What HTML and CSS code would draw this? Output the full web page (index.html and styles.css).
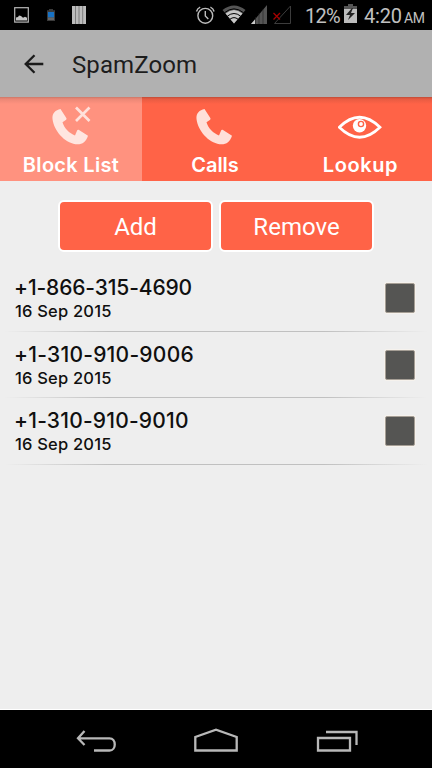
FILE: index.html
```html
<!DOCTYPE html>
<html lang="en">
<head>
<meta charset="utf-8">
<title>SpamZoom</title>
<link rel="stylesheet" href="styles.css">
</head>
<body>
<div class="screen">
  <div class="status">
    <svg class="status-icons" width="100" height="30" viewBox="0 0 100 30">
      <rect x="14.7" y="7.7" width="13.6" height="14.4" fill="none" stroke="#b8b8b8" stroke-width="1.2"/>
      <path d="M16 20.5v-3l2-.5 1-1.5 2 .5 2 1.8 2-1 2 1v2.7z" fill="#c4c4c4"/>
      <path d="M49 9h4v1.3h2V21h-8V10.300h2z" fill="#3b3b3b"/>
      <rect x="48" y="12" width="6" height="5.500" fill="#1872c4"/>
      <rect x="48" y="17.500" width="6" height="2.500" fill="#666"/>
      <path d="M72 6h14v18H72z" fill="#bcbcbc"/>
      <path d="M75.500 6v18M79 6v18M82.700 6v18" stroke="#777" stroke-width=".9"/>
    </svg>
    <svg class="signal-icons" width="100" height="30" viewBox="194 0 100 30">
      <g fill="none" stroke="#bcbcbc" stroke-width="1.400">
        <circle cx="205.300" cy="15.800" r="7.400"/>
        <path d="M205.300 11v5l3 3M196.500 11.500c.5-2 1.800-3.500 3.700-4.300M214.100 11.500c-.5-2-1.800-3.500-3.700-4.300"/>
      </g>
      <path d="M222.500 10Q234 1 245.500 10L234 23.500z" fill="#555"/>
      <path d="M225.500 13.500Q234 6.500 242.500 13.500L234 23.500z" fill="#c8c8c8"/>
      <path d="M224.500 12.700Q234 5 243.500 12.700M227.500 16Q234 11 240.500 16M230 19.200Q234 16 238 19.200" fill="none" stroke="#000" stroke-width="1"/>
      <path d="M267 5v19h-16z" fill="#555"/>
      <path d="M255 19.500V24h-4z" fill="#ccc"/>
      <path d="M255.500 17v7M259 13v11M263 9v15" stroke="#222" stroke-width=".6"/>
      <path d="M290.500 6v17.500h-16z" fill="none" stroke="#3c3c3c"/>
      <path d="M273.500 13l6.500 6.500M280 13l-6.500 6.500" stroke="#a80000" stroke-width="1.300"/>
    </svg>
    <span class="percent">12%</span>
    <svg class="battery" width="13" height="19" viewBox="0 0 13 19">
      <path d="M4 0h5v2h4v4H0V2h4z" fill="#555"/>
      <path d="M0 5h13v14H0z" fill="#bcbcbc"/>
      <path d="M8 4l-6 7h4l-2 5 7-7H7l2-5z" fill="#222"/>
    </svg>
    <span class="clock">4:20</span><span class="meridiem">AM</span>
  </div>

  <header class="appbar">
    <svg class="back" width="20" height="20" viewBox="0 0 20 20" fill="none" stroke="#1b1b1b" stroke-width="2.300">
      <path d="M19.300 10H2M10.500 1.200L1.700 10l8.800 8.800"/>
    </svg>
    <h1 class="title">SpamZoom</h1>
  </header>

  <nav class="tabs">
    <div class="tab active">
      <svg width="44" height="44" viewBox="50 103 44 44">
        <path d="M61.500 109c-5 1-8.500 4-8 10 1.500 12 12 23.500 23 25.200 6 .9 10.500-2 12.500-8.500l-9-5.700c-1-.5-1.700 0-2 .8l-2 4.700c-5.500-2-11-7.500-12.500-13.200l3.300-2.300c.8-.6.900-1.200.5-2z" fill="#ffe6e0"/>
        <path d="M77 107.500l13.500 13.500M90.500 107.500L77 121" stroke="#ffe1db" stroke-width="2.700"/>
      </svg>
      <span class="label block">Block List</span>
    </div>
    <div class="tab calls">
      <svg width="44" height="44" viewBox="50 103 44 44">
        <path d="M61.500 109c-5 1-8.500 4-8 10 1.500 12 12 23.500 23 25.200 6 .9 10.500-2 12.500-8.500l-9-5.700c-1-.5-1.700 0-2 .8l-2 4.700c-5.500-2-11-7.500-12.500-13.200l3.300-2.300c.8-.6.900-1.200.5-2z" fill="#ffe0d9"/>
      </svg>
      <span class="label call">Calls</span>
    </div>
    <div class="tab lookup">
      <svg width="44" height="44" viewBox="338 103 44 44">
        <path d="M339.300 127.300Q359.500 107.300 380 127.300Q359.500 147.300 339.300 127.300z" fill="none" stroke="#fff" stroke-width="2.700"/>
        <circle cx="359.500" cy="125.700" r="6.700" fill="#fff"/>
        <circle cx="361" cy="124" r="2.600" fill="#fff" stroke="#ff6347" stroke-width="1.400"/>
      </svg>
      <span class="label look">Lookup</span>
    </div>
  </nav>

  <div class="actions">
    <button class="btn add">Add</button>
    <button class="btn remove">Remove</button>
  </div>

  <main class="list">
    <div class="row">
      <div class="entry"><div class="phone p1">+1-866-315-4690</div><div class="date">16 Sep 2015</div></div>
      <span class="check"></span>
    </div>
    <div class="row">
      <div class="entry"><div class="phone p2">+1-310-910-9006</div><div class="date">16 Sep 2015</div></div>
      <span class="check"></span>
    </div>
    <div class="row">
      <div class="entry"><div class="phone p3">+1-310-910-9010</div><div class="date">16 Sep 2015</div></div>
      <span class="check"></span>
    </div>
  </main>

  <footer class="navbar">
    <svg width="432" height="58" viewBox="0 710 432 58" fill="none" stroke="#b8b8b8" stroke-width="2.300">
      <path d="M78 738.300h31.500c7 0 7 12.200 0 12.200H94M84.500 731l-6.500 7.300 6.500 6.700"/>
      <path d="M195.300 750.500V737l20.700-7.300 20.700 7.300v13.500z"/>
      <path d="M318 738h32v12.500h-32zM326 732h30.500v13"/>
    </svg>
  </footer>
</div>
</body>
</html>
```
FILE: styles.css
```css
* { box-sizing: border-box; }
body { margin: 0; background: #eee; }
.screen {
  width: 432px;
  height: 768px;
  display: flex;
  flex-direction: column;
  background: #eee;
  font-family: Roboto, "Liberation Sans", sans-serif;
  overflow: hidden;
}
svg { display: block; flex: none; }

.status {
  height: 30px;
  flex: none;
  display: flex;
  align-items: center;
  background: #000;
  color: #c0c0c0;
  font-size: 20px;
  line-height: 30px;
  white-space: nowrap;
}
.signal-icons { margin-left: 94px; }
.percent { width: 50px; padding: 2px 0 0 11px; letter-spacing: -0.7px; }
.battery { margin-top: -3px; }
.clock { padding: 2px 0 0 7px; width: 47px; letter-spacing: -0.2px; }
.meridiem { font-size: 14px; padding-top: 5px; letter-spacing: -0.5px; }

.appbar {
  height: 67px;
  flex: none;
  display: flex;
  align-items: center;
  padding-left: 24px;
  background: #b1b1b1;
}
.title {
  margin: 3px 0 0 28px;
  font-size: 24px;
  font-weight: 400;
  line-height: 30px;
  letter-spacing: 0.1px;
  color: #1d1d1d;
}

.tabs {
  height: 84px;
  flex: none;
  display: grid;
  grid-template-columns: 142px 146px 144px;
  background: linear-gradient(#c14c37, #e75b42 2px, #ff6347 7px);
}
.tab {
  display: flex;
  flex-direction: column;
  align-items: center;
  padding-top: 6px;
}
.active { background: linear-gradient(#cc7868, #eb8776 2px, #ff927f 7px); }
.label {
  font: 600 20px/24px Inter, sans-serif;
  color: #fff;
  margin-top: 6px;
  white-space: nowrap;
}
.block { letter-spacing: 0.3px; }
.call { letter-spacing: 0; }
.look { letter-spacing: 0.6px; padding-left: 1px; }

.actions {
  display: flex;
  gap: 6px;
  padding: 19px 0 0 58px;
  flex: none;
}
.btn {
  width: 155px;
  height: 52px;
  padding: 2px 0 0;
  border: 2px solid #fff;
  border-radius: 6px;
  background: #ff6347;
  color: #fff;
  font: 400 24px/30px Roboto, sans-serif;
}

.list { margin-top: 13px; flex: 1; }
.row {
  height: 66.500px;
  display: flex;
  justify-content: space-between;
  padding: 11px 17px 0 14px;
  background: linear-gradient(90deg, transparent 1%, #c0c0c0 25%, #c0c0c0 75%, transparent 99%) bottom / 100% 1px no-repeat;
}
.entry { font-family: Inter, sans-serif; font-weight: 500; color: #101010; white-space: nowrap; }
.phone { font-size: 21px; line-height: 24px; }
.p1 { letter-spacing: -0.13px; }
.p2 { letter-spacing: 0.25px; }
.p3 { letter-spacing: 0.2px; }
.date { font-size: 16.500px; line-height: 22px; letter-spacing: 0.2px; padding-left: 1px; }
.check {
  width: 30px;
  height: 30px;
  margin-top: 7px;
  background: #555553;
  border: 1px solid #a59e95;
  border-radius: 2px;
  box-shadow: 0 0 0 1px #f6f2ed;
}

.navbar {
  height: 58px;
  flex: none;
  background: #000;
  box-shadow: 0 -1px #fff;
}
```
